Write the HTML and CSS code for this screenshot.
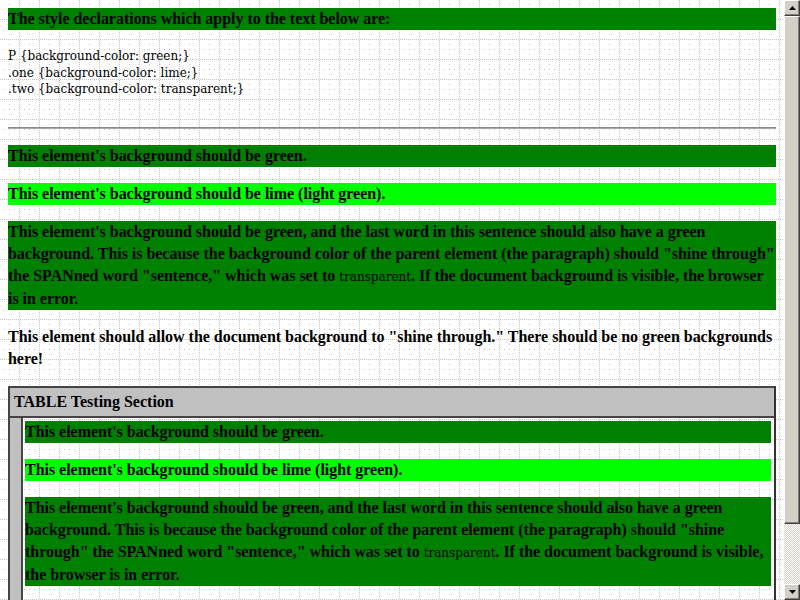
FILE: index.html
```html
<!DOCTYPE html>
<html>
<head>
<meta charset="utf-8">
<link rel="stylesheet" href="styles.css">
</head>
<body>
<div class="window">
  <div class="viewport">
    <div class="page">
      <p class="para">The style declarations which apply to the text below are:</p>
      <pre class="code">P {background-color: green;}
.one {background-color: lime;}
.two {background-color: transparent;}</pre>
      <hr class="rule">
      <p class="para">This element's background should be green.</p>
      <p class="para one">This element's background should be lime (light green).</p>
      <p class="para">This element's background should be green, and the last word in this sentence should also have a green background. This is because the background color of the parent element (the paragraph) should "shine through" the SPANned word "<span class="two">sentence</span>," which was set to <code class="mono">transparent</code>. If the document background is visible, the browser is in error.</p>
      <p class="para two">This element should allow the document background to "shine through." There should be no green backgrounds here!</p>
      <div class="table">
        <div class="thead">TABLE Testing Section</div>
        <div class="trow">
          <div class="side"></div>
          <div class="cell">
            <p class="para">This element's background should be green.</p>
            <p class="para one">This element's background should be lime (light green).</p>
            <p class="para">This element's background should be green, and the last word in this sentence should also have a green background. This is because the background color of the parent element (the paragraph) should "shine through" the SPANned word "<span class="two">sentence</span>," which was set to <code class="mono">transparent</code>. If the document background is visible, the browser is in error.</p>
            <p class="para two">This element should allow the document background to "shine through." There should be no green backgrounds here!</p>
          </div>
        </div>
      </div>
    </div>
  </div>
  <div class="scrollbar">
    <div class="btn"><svg width="7" height="4" viewBox="0 0 7 4"><path d="M3.5 0L7 4H0Z" fill="#000"/></svg></div>
    <div class="thumb"></div>
    <div class="track"></div>
    <div class="btn"><svg width="7" height="4" viewBox="0 0 7 4"><path d="M0 0H7L3.5 4Z" fill="#000"/></svg></div>
  </div>
</div>
</body>
</html>
```
FILE: styles.css
```css
html, body {
  margin: 0;
  padding: 0;
  overflow: hidden;
}
.window {
  width: 800px;
  height: 600px;
  display: flex;
}
.viewport {
  width: 784px;
  height: 600px;
  overflow: hidden;
  background-color: #fff;
  background-image: url("data:image/svg+xml,%3Csvg xmlns='http://www.w3.org/2000/svg' width='20' height='20'%3E%3Cg fill='%23c4c4c4'%3E%3Crect x='19' y='0' width='1' height='1'/%3E%3Crect x='19' y='2' width='1' height='1'/%3E%3Crect x='19' y='4' width='1' height='1'/%3E%3Crect x='19' y='6' width='1' height='1'/%3E%3Crect x='19' y='8' width='1' height='1'/%3E%3Crect x='19' y='10' width='1' height='1'/%3E%3Crect x='19' y='12' width='1' height='1'/%3E%3Crect x='19' y='14' width='1' height='1'/%3E%3Crect x='19' y='16' width='1' height='1'/%3E%3Crect x='19' y='18' width='1' height='1'/%3E%3Crect x='0' y='19' width='1' height='1'/%3E%3Crect x='2' y='19' width='1' height='1'/%3E%3Crect x='4' y='19' width='1' height='1'/%3E%3Crect x='6' y='19' width='1' height='1'/%3E%3Crect x='8' y='19' width='1' height='1'/%3E%3Crect x='10' y='19' width='1' height='1'/%3E%3Crect x='12' y='19' width='1' height='1'/%3E%3Crect x='14' y='19' width='1' height='1'/%3E%3Crect x='16' y='19' width='1' height='1'/%3E%3Crect x='18' y='19' width='1' height='1'/%3E%3Crect x='9' y='4' width='1' height='1'/%3E%3Crect x='4' y='9' width='1' height='1'/%3E%3Crect x='9' y='9' width='1' height='1'/%3E%3Crect x='14' y='9' width='1' height='1'/%3E%3Crect x='9' y='14' width='1' height='1'/%3E%3C/g%3E%3C/svg%3E");
}
.page {
  padding: 8px;
  font-family: "Liberation Serif", "Times New Roman", serif;
  color: #000;
}
.para {
  margin: 0 0 16px 0;
  background-color: green;
  font-weight: bold;
  font-size: 16px;
  line-height: 22px;
  letter-spacing: -0.03px;
}
.para.one { background-color: lime; }
.para.two, .two { background-color: transparent; }
.mono {
  font-family: "DejaVu Serif", serif;
  font-weight: normal;
  font-size: 12px;
  letter-spacing: 0;
}
.code {
  margin: 18px 0 0;
  font-family: "DejaVu Serif", serif;
  font-size: 12px;
  line-height: 16.5px;
}
.rule {
  margin: 29.5px 0 16px;
  border: 0;
  border-top: 1px solid #8c8c8c;
  border-bottom: 1px solid #a8a8a8;
  height: 0;
}
.table {
  border: 2px solid #444;
  border-right-color: #333;
  border-bottom-color: #333;
}
.thead {
  background: silver;
  font-weight: bold;
  font-size: 16px;
  line-height: 22px;
  padding: 3px 4px;
  border-bottom: 2px solid #444;
}
.trow {
  display: flex;
}
.side {
  width: 11px;
  background: silver;
  border-right: 2px solid #444;
}
.cell {
  flex: 1;
  padding: 3px 3px 0 2px;
}
.scrollbar {
  width: 16px;
  height: 600px;
  display: flex;
  flex-direction: column;
  background-color: #e8e6e2;
  background-image: repeating-conic-gradient(#d4d0c8 0 25%, #fff 0 50%);
  background-size: 2px 2px;
}
.btn {
  height: 16px;
  box-sizing: border-box;
  background: #d4d0c8;
  border: 1px solid;
  border-color: #fff #404040 #404040 #fff;
  box-shadow: inset -1px -1px #808080;
  display: flex;
  align-items: center;
  justify-content: center;
}
.thumb {
  height: 508px;
  box-sizing: border-box;
  background: #d4d0c8;
  border: 1px solid;
  border-color: #fff #404040 #404040 #fff;
  box-shadow: inset -1px -1px #808080;
}
.track {
  flex: 1;
}
```
